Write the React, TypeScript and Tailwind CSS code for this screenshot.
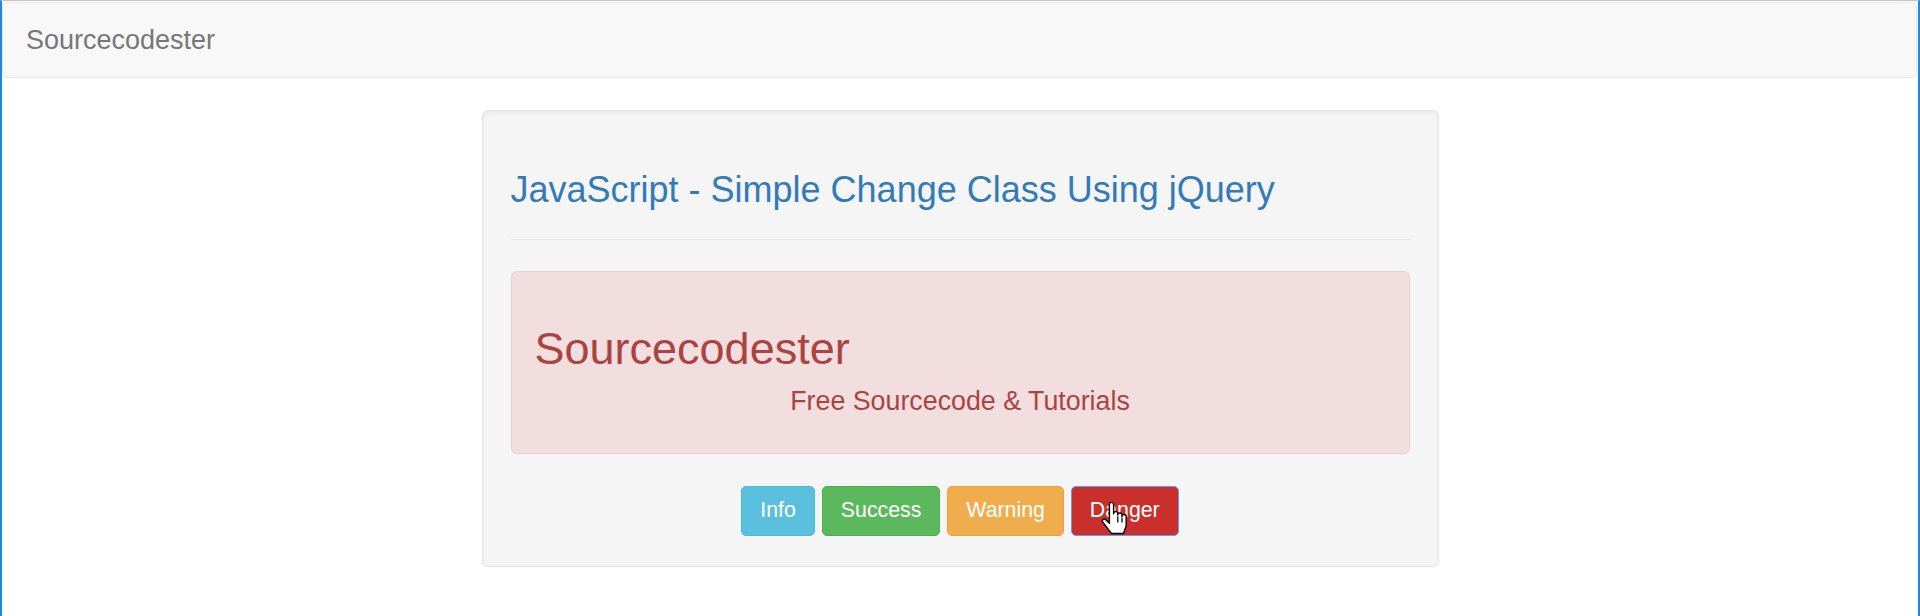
import React from 'react'

const buttons = [
  { label: 'Info', cls: 'bg-[#5bc0de] border-[#46b8da]' },
  { label: 'Success', cls: 'bg-[#5cb85c] border-[#4cae4c]' },
  { label: 'Warning', cls: 'bg-[#f0ad4e] border-[#eea236]' },
  { label: 'Danger', cls: 'bg-[#c9302c] border-[#5e9cf5]' },
]

function HandCursor() {
  return (
    <svg className="absolute left-[29px] top-[15px] w-[28px] h-[34px]" viewBox="0 0 20 24">
      <path
        d="M6 1.6a1.5 1.5 0 0 1 3 0V8.2a1.5 1.5 0 0 1 3 0V9.2a1.5 1.5 0 0 1 3 0V10.3a1.5 1.5 0 0 1 3 0V17l-2 5.4H7.6L1.4 14.4a1.4 1.4 0 0 1 2.1-1.9L6 15Z"
        fill="#fff"
        stroke="#000"
        strokeWidth="1"
        strokeLinejoin="round"
      />
      <path d="M12 10v4.5M15 11v3.5" stroke="#000" strokeWidth="0.9" />
    </svg>
  )
}

export default function App() {
  return (
    <div
      className="h-[616px] bg-white border-t border-t-[#c4c4c4] border-x-2 border-x-[#1e88e5] overflow-hidden"
      style={{ fontFamily: '"Liberation Sans", Arial, sans-serif' }}
    >
      {/* Navbar */}
      <div className="mt-px mr-px h-[76px] bg-[#f8f8f8] border border-[#e7e7e7] rounded-[5px] flex items-center pl-[23px]">
        <span className="text-[27px] text-[#777]">Sourcecodester</span>
      </div>

      {/* Well */}
      <div className="mx-auto mt-[32px] w-[957px] bg-[#f5f5f5] border border-[#e3e3e3] rounded-[6px] shadow-inner px-[28px] pt-[57px] pb-[30px]">
        <h3 className="text-[36px] leading-[44px] text-[#337ab7]">
          JavaScript - Simple Change Class Using jQuery
        </h3>
        <hr className="mt-[27px] border-0 border-t border-[#e6e6e6]" />

        <div className="mt-[31px] h-[183px] bg-[#f2dede] border border-[#ebccd1] rounded-[6px] px-[22px] pt-[52px] text-[#a94442]">
          <div className="text-[45px] leading-[50px] pl-px">Sourcecodester</div>
          <div className="mt-[12px] text-[26.8px] leading-[30px] text-center">Free Sourcecode &amp; Tutorials</div>
        </div>

        <div className="mt-[32px] flex justify-center gap-[7px]">
          {buttons.map((b) => (
            <button
              key={b.label}
              className={`relative h-[50px] px-[18px] border rounded-[5px] text-white text-[21.3px] flex items-center ${b.cls}`}
            >
              {b.label}
              {b.label === 'Danger' && <HandCursor />}
            </button>
          ))}
        </div>
      </div>
    </div>
  )
}
